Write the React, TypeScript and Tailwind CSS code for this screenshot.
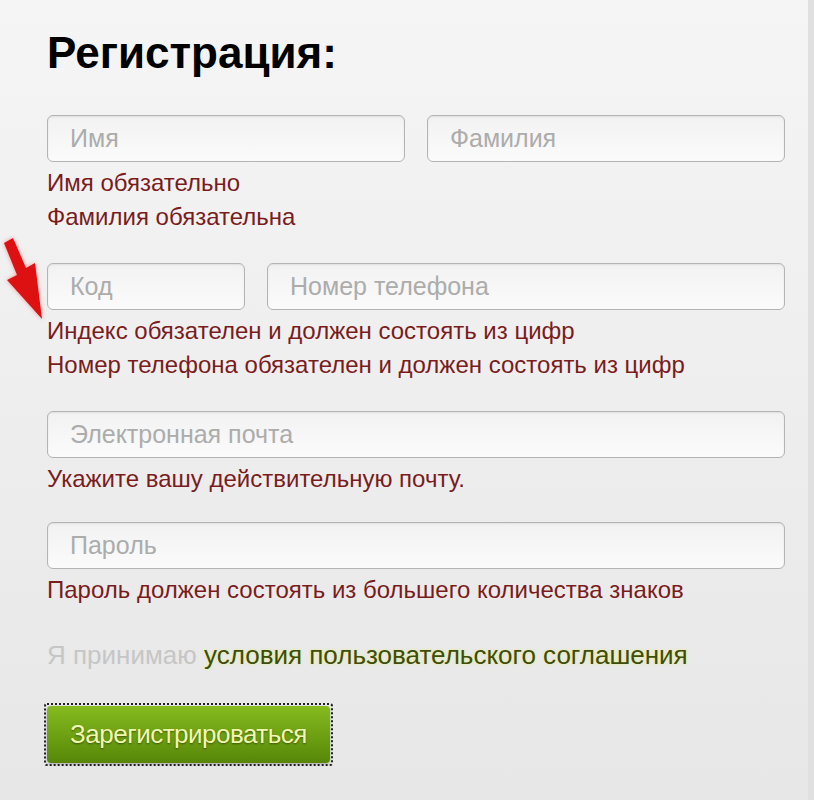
const font = { fontFamily: '"Liberation Sans", Arial, sans-serif' };

function Field({ placeholder, className = '' }: { placeholder: string; className?: string }) {
  return (
    <div
      className={`h-[47px] rounded-[6px] border border-[#b4b4b4] bg-gradient-to-b from-[#f2f2f2] to-[#fbfbfb] shadow-[inset_0_1px_2px_rgba(0,0,0,0.08)] flex items-center pl-[22px] text-[25px] text-[#acacac] ${className}`}
    >
      {placeholder}
    </div>
  );
}

function Errors({ lines }: { lines: string[] }) {
  return (
    <div className="mt-[4px] text-[24px] leading-[34px] text-[#7a1c1c]">
      {lines.map((l) => (
        <div key={l}>{l}</div>
      ))}
    </div>
  );
}

export default function App() {
  return (
    <div
      style={font}
      className="relative w-[814px] h-[800px] overflow-hidden bg-gradient-to-b from-[#f5f5f5] to-[#e7e7e7] border-r-[6px] border-[#e0e0e0]"
    >
      <svg
        className="absolute left-0 top-[230px]"
        width="50"
        height="96"
        viewBox="0 0 50 96"
        style={{ filter: 'drop-shadow(0 0 2px rgba(255,80,80,0.6))' }}
      >
        <polygon points="4,13 13,8 26,38 35,33 42,89 7,50 17,45" fill="#dd1111" />
      </svg>

      <div className="pl-[47px] w-[785px] pt-[31px]">
        <h1 className="text-[44px] leading-[44px] font-bold text-black">Регистрация:</h1>

        <div className="mt-[40px] flex gap-[22px]">
          <Field placeholder="Имя" className="flex-1" />
          <Field placeholder="Фамилия" className="flex-1" />
        </div>
        <Errors lines={['Имя обязательно', 'Фамилия обязательна']} />

        <div className="mt-[29px] flex gap-[22px]">
          <Field placeholder="Код" className="w-[198px]" />
          <Field placeholder="Номер телефона" className="flex-1" />
        </div>
        <Errors
          lines={[
            'Индекс обязателен и должен состоять из цифр',
            'Номер телефона обязателен и должен состоять из цифр',
          ]}
        />

        <div className="mt-[29px]">
          <Field placeholder="Электронная почта" />
        </div>
        <Errors lines={['Укажите вашу действительную почту.']} />

        <div className="mt-[26px]">
          <Field placeholder="Пароль" />
        </div>
        <Errors lines={['Пароль должен состоять из большего количества знаков']} />

        <div className="mt-[31px] text-[26px] leading-[34px]">
          <span className="text-[#c6c6c6]">Я принимаю </span>
          <span className="text-[#3f4d0c] [text-shadow:0_0_3px_rgba(230,240,120,0.9)]">
            условия пользовательского соглашения
          </span>
        </div>

        <div className="mt-[31px] -ml-[3px] w-[289px] h-[63px] border-2 border-dotted border-[#222] rounded-[3px] p-[1px]">
          <div className="w-full h-full rounded-[4px] bg-gradient-to-b from-[#86bb1f] via-[#6fa113] to-[#578708] flex items-center justify-center text-[26px] tracking-[-0.5px] text-[#f0f8b0] [text-shadow:0_1px_2px_rgba(0,0,0,0.45)] shadow-[0_1px_3px_rgba(0,0,0,0.3)]">
            Зарегистрироваться
          </div>
        </div>
      </div>
    </div>
  );
}
